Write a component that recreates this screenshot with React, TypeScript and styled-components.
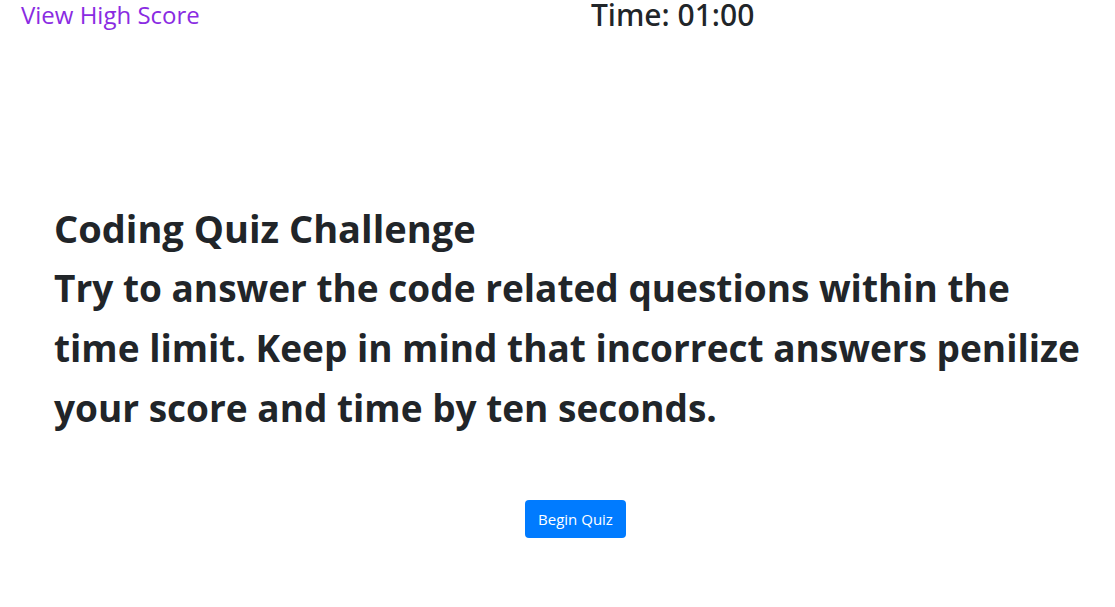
import React from "react";
import styled, { createGlobalStyle } from "styled-components";

const GlobalStyle = createGlobalStyle`
  *, *::before, *::after { box-sizing: border-box; }
  body {
    margin: 0;
    background: #fff;
    color: #212529;
    font-family: "Open Sans", "Noto Sans", sans-serif;
    font-size: 16px;
    line-height: 24px;
  }
`;

const Header = styled.header`
  display: grid;
  grid-template-columns: 53% 1fr;
  align-items: start;
  padding-bottom: 168px;
`;

const ScoreLink = styled.a`
  justify-self: start;
  padding-left: 21px;
  color: #8a2be2;
  font-size: 24px;
  line-height: 30px;
  text-decoration: none;
`;

const Timer = styled.h2`
  margin: 0;
  font-family: "Noto Sans", "Open Sans", sans-serif;
  font-size: 30px;
  font-weight: 500;
  line-height: 30px;
`;

const Intro = styled.section`
  padding: 0 16px 0 54px;
  font-weight: 700;
  line-height: 60px;
`;

const Title = styled.h1`
  margin: 0;
  font: inherit;
  font-size: 38px;
`;

const Description = styled.p`
  margin: 0;
  font-size: 37px;
`;

const Actions = styled.div`
  display: flex;
  justify-content: center;
  padding: 62px 0 48px 36px;
`;

const BeginButton = styled.button`
  height: 38px;
  padding: 0 13px;
  border: 0;
  border-radius: 4px;
  background: #007bff;
  color: #fff;
  font: inherit;
  font-size: 15px;
  cursor: pointer;
`;

export default function App() {
  return (
    <>
      <GlobalStyle />
      <Header>
        <ScoreLink href="#scores">View High Score</ScoreLink>
        <Timer>Time: 01:00</Timer>
      </Header>
      <main>
        <Intro>
          <Title>Coding Quiz Challenge</Title>
          <Description>
            Try to answer the code related questions within the time limit. Keep
            in mind that incorrect answers penilize your score and time by ten
            seconds.
          </Description>
        </Intro>
        <Actions>
          <BeginButton type="button">Begin Quiz</BeginButton>
        </Actions>
      </main>
    </>
  );
}
